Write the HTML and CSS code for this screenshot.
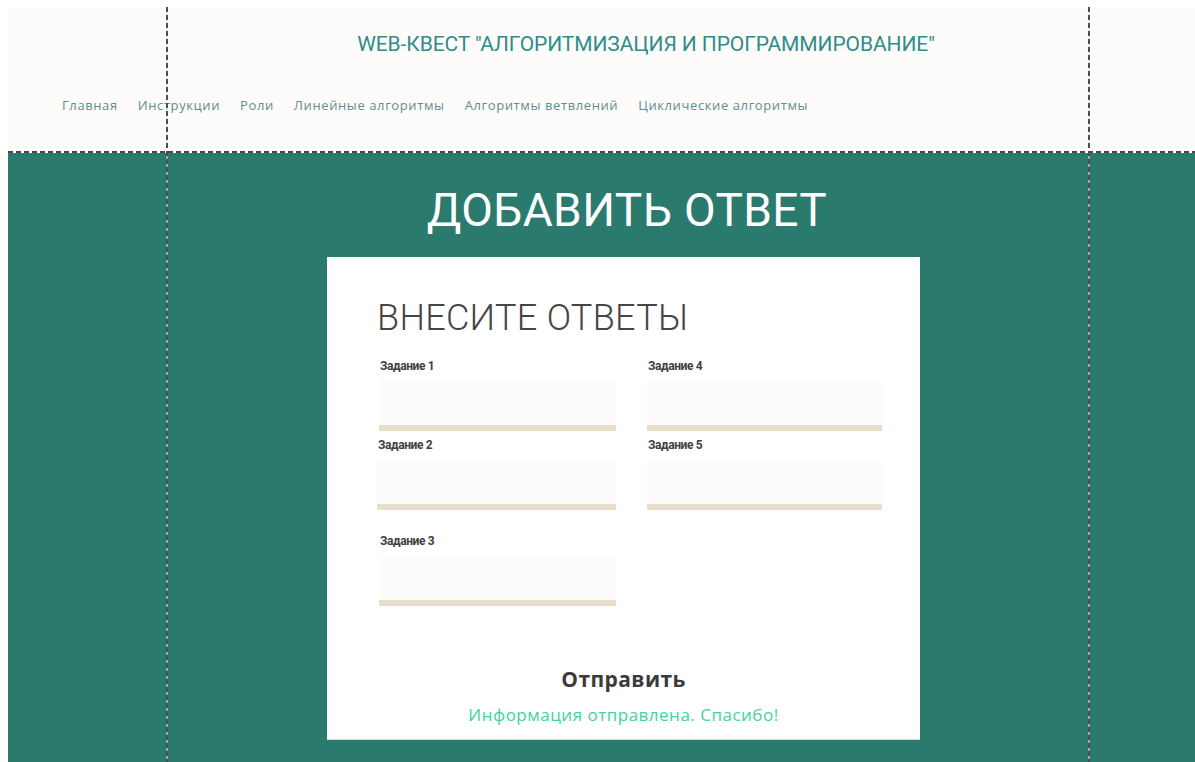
FILE: index.html
```html
<!DOCTYPE html>
<html lang="ru">
<head>
<meta charset="utf-8">
<title>Web-квест — Добавить ответ</title>
<link rel="stylesheet" href="styles.css">
</head>
<body>
<div class="page">
  <header class="site-header">
    <div class="site-title">WEB-КВЕСТ "АЛГОРИТМИЗАЦИЯ И ПРОГРАММИРОВАНИЕ"</div>
    <nav class="site-nav">
      <a href="#">Главная</a>
      <a href="#">Инструкции</a>
      <a href="#">Роли</a>
      <a href="#">Линейные алгоритмы</a>
      <a href="#">Алгоритмы ветвлений</a>
      <a href="#">Циклические алгоритмы</a>
    </nav>
  </header>

  <main class="site-main">
    <h1 class="main-title">ДОБАВИТЬ ОТВЕТ</h1>
    <section class="card">
      <h2 class="card-title">ВНЕСИТЕ ОТВЕТЫ</h2>
      <form class="answers">
        <div class="col">
          <label class="field">
            <span class="field-label">Задание 1</span>
            <input class="field-input" type="text">
          </label>
          <label class="field field-shift">
            <span class="field-label">Задание 2</span>
            <input class="field-input" type="text">
          </label>
          <label class="field field-last">
            <span class="field-label">Задание 3</span>
            <input class="field-input" type="text">
          </label>
        </div>
        <div class="col">
          <label class="field">
            <span class="field-label">Задание 4</span>
            <input class="field-input" type="text">
          </label>
          <label class="field">
            <span class="field-label">Задание 5</span>
            <input class="field-input" type="text">
          </label>
        </div>
      </form>
      <button class="submit" type="button">Отправить</button>
      <p class="notice">Информация отправлена. Спасибо!</p>
    </section>
  </main>

  <!-- layout guides drawn over the page -->
  <div class="guide guide-left"></div>
  <div class="guide guide-right"></div>
</div>
</body>
</html>
```

FILE: styles.css
```css
html, body {
  height: 100%;
}

body {
  margin: 0;
  padding: 7px 0 0 8px;
  box-sizing: border-box;
  background: #ffffff;
  font-family: Roboto, "Liberation Sans", sans-serif;
  overflow: hidden;
}

.page {
  position: relative;
  display: flex;
  flex-direction: column;
  height: 100%;
}

/* ---------- header ---------- */
.site-header {
  background: #fdfcfa;
  height: 146px;
  box-sizing: border-box;
  padding-top: 25px;
  background-image: repeating-linear-gradient(90deg, #4a4a4a 0 5px, transparent 5px 8px);
  background-size: 100% 2px;
  background-repeat: no-repeat;
  background-position: 0 100%;
}

.site-title {
  padding-left: 89px;
  text-align: center;
  font-size: 21px;
  line-height: 24px;
  color: #2e8c8a;
  letter-spacing: -0.1px;
}

.site-nav {
  display: flex;
  gap: 20px;
  padding-left: 54px;
  margin-top: 40px;
}

.site-nav a {
  font-family: "Open Sans", "Noto Sans", sans-serif;
  font-size: 13px;
  line-height: 18px;
  color: #5e8f8d;
  text-decoration: none;
  letter-spacing: 0.6px;
}

/* ---------- main area ---------- */
.site-main {
  flex: 1;
  background: #2a7b6e;
  padding-left: 158px;
  width: 922px;
  padding-right: calc(100% - 1080px);
  box-sizing: content-box;
}

.main-title {
  margin: 0;
  padding-top: 30px;
  text-align: center;
  font-weight: 400;
  font-size: 46px;
  line-height: 54px;
  color: #ffffff;
  letter-spacing: 0.4px;
}

.card {
  margin: 20px 0 0 161px;
  width: 593px;
  height: 483px;
  box-sizing: border-box;
  background: #ffffff;
  border-bottom: 1px solid #cfe0dc;
  padding: 40px 38px 0 50px;
  display: flex;
  flex-direction: column;
}

.card-title {
  margin: 0;
  font-weight: 300;
  font-size: 36px;
  line-height: 42px;
  color: #454545;
  letter-spacing: 0.3px;
}

.answers {
  display: flex;
  gap: 31px;
  margin-top: 20px;
  padding-left: 2px;
}

.col {
  display: flex;
  flex-direction: column;
  gap: 7px;
}

.col:first-child {
  width: 237px;
}

.col:last-child {
  width: 235px;
}

.field {
  display: flex;
  flex-direction: column;
}

.field-shift {
  margin-left: -2px;
}

.field-shift .field-input {
  width: 239px;
}

.field-last {
  margin-top: 17px;
}

.field-label {
  font-size: 12px;
  line-height: 14px;
  font-weight: 700;
  color: #404040;
  padding-left: 1px;
  letter-spacing: -0.4px;
}

.field-input {
  margin-top: 8px;
  box-sizing: border-box;
  height: 50px;
  width: 100%;
  border: 0;
  border-bottom: 6px solid #e8dfca;
  background: #fdfcfa;
  outline: none;
}

.submit {
  align-self: center;
  margin: 59px 0 0 -12px;
  padding: 0;
  border: 0;
  background: transparent;
  font-family: "Open Sans", "Noto Sans", sans-serif;
  font-weight: 700;
  font-size: 21px;
  line-height: 28px;
  color: #3b3b3b;
  letter-spacing: 0.4px;
}

.notice {
  margin: 11px 0 0 -12px;
  text-align: center;
  font-family: "Open Sans", "Noto Sans", sans-serif;
  font-size: 17px;
  line-height: 22px;
  color: #45d39c;
  letter-spacing: 0.5px;
}

/* ---------- guides ---------- */
.guide {
  position: absolute;
  top: 0;
  bottom: 0;
  width: 2px;
  background: repeating-linear-gradient(180deg, #4a4f4e 0 5px, rgba(255, 255, 255, 0.45) 5px 8px);
}

.guide-left {
  left: 158px;
}

.guide-right {
  left: 1080px;
}
```
